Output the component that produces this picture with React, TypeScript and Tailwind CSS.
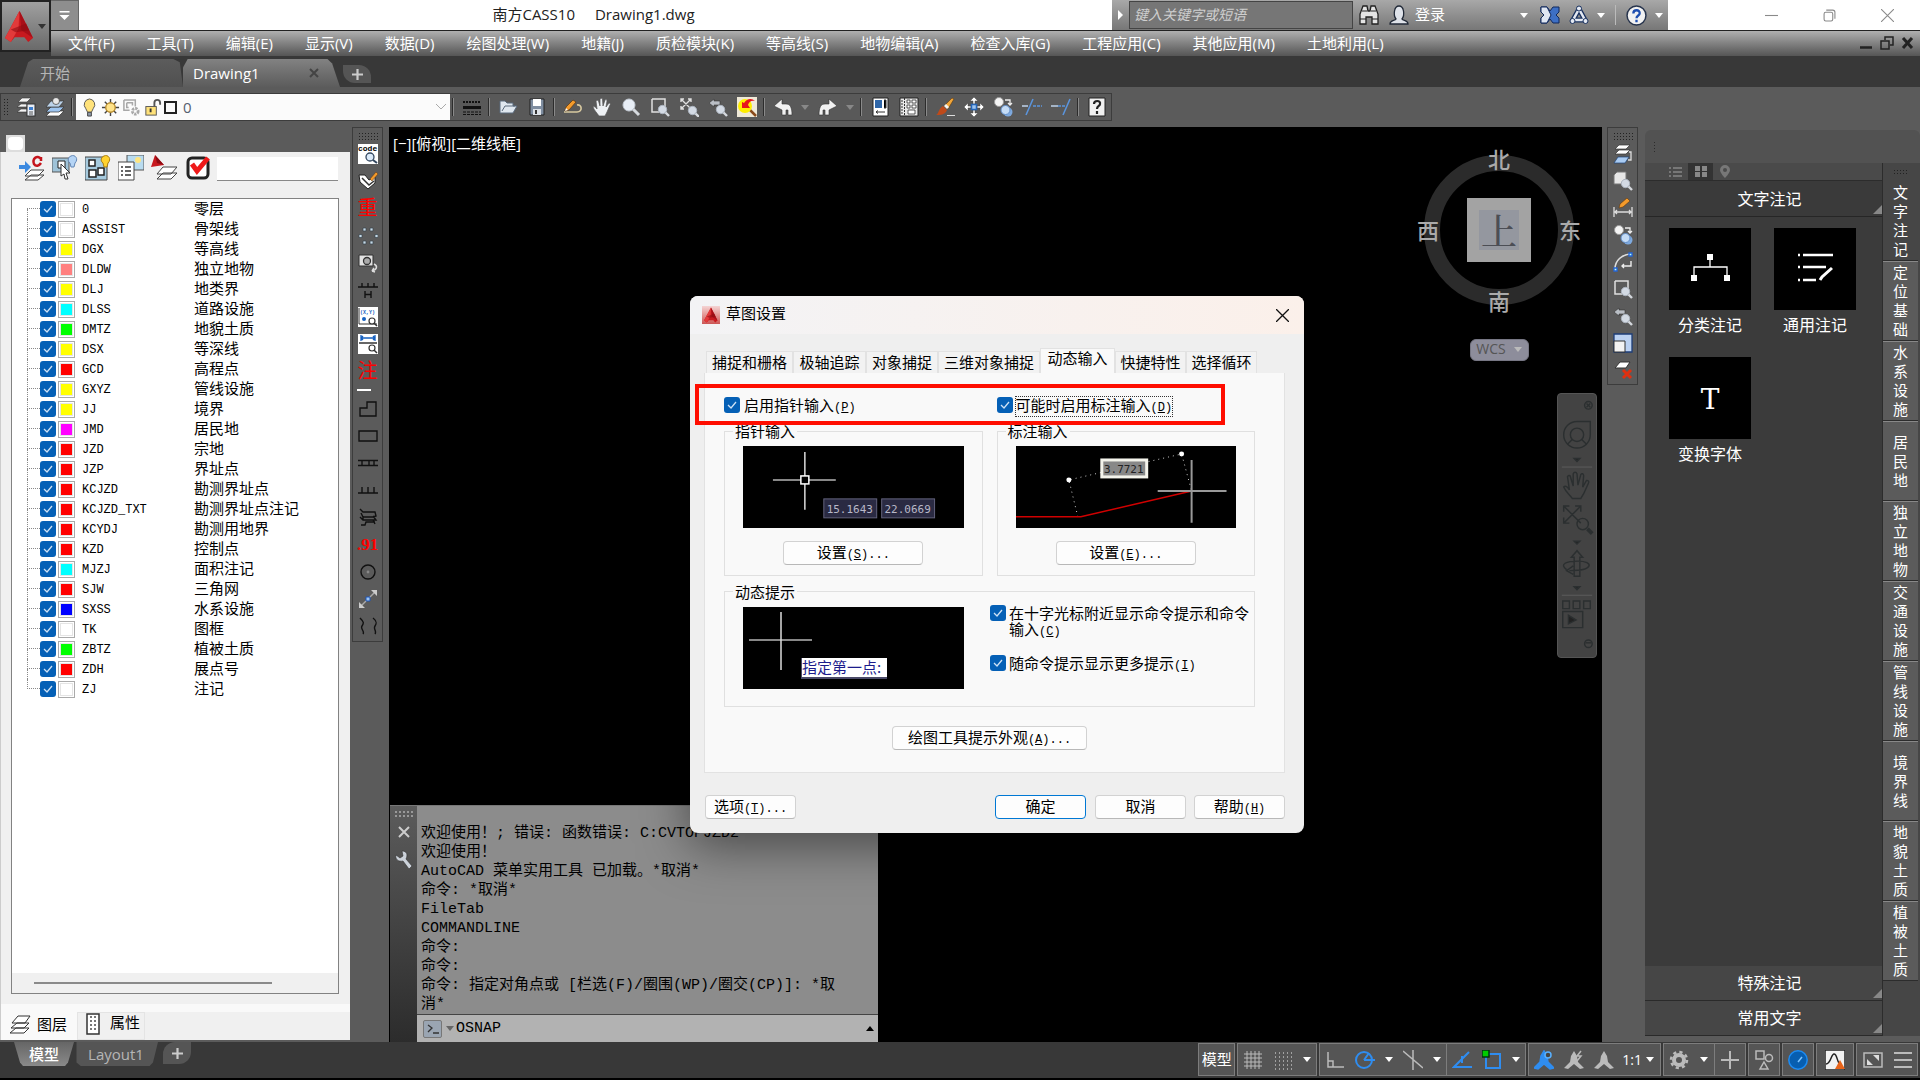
import type { ReactNode } from 'react';

const MENUS = [
  '文件(F)', '工具(T)', '编辑(E)', '显示(V)', '数据(D)', '绘图处理(W)', '地籍(J)', '质检模块(K)',
  '等高线(S)', '地物编辑(A)', '检查入库(G)', '工程应用(C)', '其他应用(M)', '土地利用(L)',
];

const LAYERS = [
  { code: '0', name: '零层', color: '#ffffff' },
  { code: 'ASSIST', name: '骨架线', color: '#ffffff' },
  { code: 'DGX', name: '等高线', color: '#ffff00' },
  { code: 'DLDW', name: '独立地物', color: '#ff8080' },
  { code: 'DLJ', name: '地类界', color: '#ffff00' },
  { code: 'DLSS', name: '道路设施', color: '#00ffff' },
  { code: 'DMTZ', name: '地貌土质', color: '#00ff00' },
  { code: 'DSX', name: '等深线', color: '#ffff00' },
  { code: 'GCD', name: '高程点', color: '#ff0000' },
  { code: 'GXYZ', name: '管线设施', color: '#ffff00' },
  { code: 'JJ', name: '境界', color: '#ffff00' },
  { code: 'JMD', name: '居民地', color: '#ff00ff' },
  { code: 'JZD', name: '宗地', color: '#ff0000' },
  { code: 'JZP', name: '界址点', color: '#ff0000' },
  { code: 'KCJZD', name: '勘测界址点', color: '#ff0000' },
  { code: 'KCJZD_TXT', name: '勘测界址点注记', color: '#ff0000' },
  { code: 'KCYDJ', name: '勘测用地界', color: '#ff0000' },
  { code: 'KZD', name: '控制点', color: '#ff0000' },
  { code: 'MJZJ', name: '面积注记', color: '#00ffff' },
  { code: 'SJW', name: '三角网', color: '#ff0000' },
  { code: 'SXSS', name: '水系设施', color: '#0000ff' },
  { code: 'TK', name: '图框', color: '#ffffff' },
  { code: 'ZBTZ', name: '植被土质', color: '#00ff00' },
  { code: 'ZDH', name: '展点号', color: '#ff0000' },
  { code: 'ZJ', name: '注记', color: '#ffffff' },
];

const LOG = [
  '欢迎使用！; 错误: 函数错误: C:CVTOPJZD2',
  '欢迎使用！',
  'AutoCAD 菜单实用工具 已加载。*取消*',
  '命令: *取消*',
  'FileTab',
  'COMMANDLINE',
  '命令:',
  '命令:',
  '命令: 指定对角点或 [栏选(F)/圈围(WP)/圈交(CP)]: *取消*',
];

const SIDE_TABS = ['文字注记', '定位基础', '水系设施', '居民地', '独立地物', '交通设施', '管线设施', '境界线', '地貌土质', '植被土质'];

const lens = (
  <g>
    <path d="M15 15l4 4" stroke="#d5d9de" strokeWidth="2.4" />
    <circle cx="12.5" cy="12.5" r="4.2" fill="#d3dae4" stroke="#aab2bd" />
  </g>
);

const ICONS: Record<string, ReactNode> = {
  layerProps: (
    <g>
      <path d="M2 5l4-4h9l-4 4zM1 10l4-3h6v3zM1 15l4-3h6v3z" fill="#f4f4f4" stroke="#333" strokeWidth=".6" />
      <rect x="11" y="7" width="8" height="12" fill="#e8edf5" stroke="#333" />
      <rect x="13" y="10" width="4" height="3" fill="#3d7fd0" />
      <path d="M13 15h4M13 17h4" stroke="#555" />
    </g>
  ),
  layerStates: (
    <g stroke="#333" strokeWidth=".7">
      <path d="M1 19l5-5h13l-5 5z" fill="#fff" />
      <path d="M1 15l5-5h13l-5 5z" fill="#9ec5f0" />
      <path d="M1 10l5-6h13l-5 6z" fill="#bcd3ea" />
      <circle cx="11" cy="4" r="3.500" fill="#e8e8e8" />
    </g>
  ),
  bulb: (
    <g>
      <path d="M10 1a6 6 0 0 0-4 10l2 4h4l2-4a6 6 0 0 0-4-10z" fill="#ffe27a" stroke="#555" />
      <path d="M8 15h4v4H8z" fill="#8d99aa" stroke="#444" />
    </g>
  ),
  sun: (
    <g>
      <path d="M10 1v18M1 10h18M4 4l12 12M16 4L4 16" stroke="#444" strokeWidth="1.5" />
      <circle cx="10" cy="10" r="5" fill="#ffe38a" stroke="#b68a2c" strokeWidth="1.4" />
    </g>
  ),
  vpFreeze: (
    <g fill="none" stroke="#a8a8a8" strokeWidth="1.6">
      <path d="M2 2h12v7M2 2v11h6M5 5h6v3M5 5v5h2" />
      <circle cx="14" cy="14" r="3" strokeWidth="3" strokeDasharray="2.4 1" />
    </g>
  ),
  unlock: (
    <g>
      <path d="M12 9V5a3 3 0 0 1 6 0v2" fill="none" stroke="#555" strokeWidth="2" />
      <rect x="3" y="9" width="11" height="9" fill="#ffe27a" stroke="#555" />
      <path d="M8 11v4" stroke="#333" strokeWidth="2" />
    </g>
  ),
  lineweight: (
    <g stroke="#111">
      <path d="M1 5h18" strokeWidth="2" strokeDasharray="2 1" />
      <path d="M1 10.500h18" strokeWidth="3" />
      <path d="M1 15h18M1 17.500h18" strokeDasharray="3 1" />
    </g>
  ),
  open: <path d="M2 16V4h5l2 2h6v3h4l-4 7zM4 14l3-5h10" fill="#dfe7ef" stroke="#5a6a7c" />,
  save: (
    <g>
      <path d="M3 2h14v16H3z" fill="#7e8da0" stroke="#222" />
      <path d="M6 2h8v7H6z" fill="#fff" />
      <path d="M6 12h8v6H6z" fill="#dde2e8" />
      <path d="M8 13h2v4H8z" fill="#333" />
    </g>
  ),
  sketch: (
    <g>
      <path d="M1 15h13c6 0 5-8 0-7" fill="none" stroke="#d8c9a0" strokeWidth="1.6" />
      <path d="M2 14l1-4 7-7 3 2-7 8z" fill="#f39a2b" stroke="#5a3510" strokeWidth=".7" />
      <path d="M2 14l1-3 2 2z" fill="#fff" />
    </g>
  ),
  hand: <path d="M7 19c-2-3-5-6-6-9 1-1 3 0 4 2L4 4c1-1 2-1 2.500 0L8 9V2c1-1 2-1 2.500 0L11 9l2-6c1-1 2 0 2 1l-1 6 3-4c1 0 2 1 1 2l-3 7-2 4z" fill="#eef1f4" stroke="#555" strokeWidth=".7" />,
  zoom: (
    <g>
      <path d="M12 12l6 6" stroke="#d5d9de" strokeWidth="3" />
      <circle cx="8" cy="8" r="6" fill="#e8eef6" stroke="#c2c9d2" />
    </g>
  ),
  zoomWin: <g><path d="M2 2h13v8M2 2v13h7" fill="none" stroke="#e0e0e0" strokeWidth="1.5" />{lens}</g>,
  zoomExt: <g><path d="M2 2l10 10M12 2L2 12M2 5V2h3M9 2h3v3M2 9v3h3" fill="none" stroke="#e0e0e0" strokeWidth="1.4" /><g transform="translate(1 1)">{lens}</g></g>,
  zoomPrev: <g><path d="M1 6l5-4v2h6v4H6v2z" fill="#b9bec5" stroke="#333" strokeWidth=".6" />{lens}</g>,
  realtime: (
    <g>
      <path d="M0 0h20v20H0z" fill="#efe9d8" />
      <path d="M13 13l6 6" stroke="#8a4a1a" strokeWidth="2.500" />
      <circle cx="8" cy="9" r="7" fill="#ffee00" />
      <path d="M5 11V5l2 1c3-5 8-5 11-2-4-1-6 1-7 4l2 3z" fill="#e8141c" />
    </g>
  ),
  undo: <path d="M1 9l8-7v5h4c4 0 6 3 6 11h-4v-5h-2v5H9v-5z" fill="#f1f1f1" stroke="#333" strokeWidth=".6" />,
  redo: <path d="M19 9l-8-7v5H7c-4 0-6 3-6 11h4v-5h2v5h4v-5z" fill="#f1f1f1" stroke="#333" strokeWidth=".6" />,
  props: (
    <g>
      <path d="M3 1h15v18H3z" fill="#fff" stroke="#222" />
      <path d="M5 3h7v8H5z" fill="#2f66a8" />
      <path d="M14 3h2v8h-2M6 15h9M6 15l2-1.500M6 15l2 1.500" stroke="#333" />
    </g>
  ),
  design: (
    <g>
      <path d="M1 1h18v18H1z" fill="#e8e8e8" stroke="#222" />
      <path d="M3 3v14M5.500 1v18" stroke="#333" strokeDasharray="2 1" />
      <path d="M8 3h3v3H8zM13 3h4v3h-4zM8 8h3v3H8zM13 8h4v3h-4zM9 13h7v4H9z" fill="#fff" stroke="#333" strokeWidth=".8" />
    </g>
  ),
  match: (
    <g>
      <path d="M9 9l8-8 2 1-6 10z" fill="#f2a63a" stroke="#5c3a12" strokeWidth=".6" />
      <path d="M9 9l2-2 3 3-2 2z" fill="#f4f4f4" />
      <path d="M1 18c3-1 2-6 7-9l4 4c-2 5-7 5-11 5z" fill="#c04a1a" />
      <path d="M12 18.500h8" stroke="#ddd" />
    </g>
  ),
  move: (
    <g>
      <path d="M10 0l4 4h-3v3H9V4H6zM10 20l4-4h-3v-3H9v3H6zM0 10l4-4v3h3v2H4v3zM20 10l-4-4v3h-3v2h3v3z" fill="#fff" stroke="#444" strokeWidth=".5" />
      <rect x="7.500" y="7.500" width="5" height="5" fill="#9ec5f0" stroke="#2465b8" strokeWidth="1.500" />
    </g>
  ),
  copy: (
    <g>
      <circle cx="6" cy="5" r="4.500" fill="#f4f4f4" stroke="#999" />
      <path d="M12 3h5v5M15 6l2 2 2-2" fill="none" stroke="#eee" strokeWidth="1.300" />
      <circle cx="15" cy="15" r="4.500" fill="#7ea9de" />
      <circle cx="12.500" cy="13" r="4.500" fill="#c5dcf6" stroke="#5f8cc8" />
    </g>
  ),
  trim: <g strokeWidth="1.600" fill="none"><path d="M0 9h6" stroke="#b8cbe2" /><path d="M4 18L11 2" stroke="#5b95dd" /><path d="M11 9h9" stroke="#5b95dd" strokeDasharray="3 1" /></g>,
  extend: <g strokeWidth="1.600" fill="none"><path d="M0 9h7" stroke="#b8cbe2" /><path d="M12 18L19 2" stroke="#5b95dd" /><path d="M7 9h8" stroke="#5b95dd" strokeDasharray="3 1" /></g>,
  help: (
    <g>
      <path d="M2 1h16v18H2z" fill="#f0f0f0" stroke="#222" />
      <path d="M7 7c0-4 7-4 6 0 0 2-3 2-3 5M10 14v3" fill="none" stroke="#222" strokeWidth="2.200" />
    </g>
  ),
  // left tool column
  code: (
    <g>
      <path d="M0 0h20v20H0z" fill="#fff" />
      <text x="0" y="7" fontSize="8" fontFamily="Liberation Mono" fontWeight="bold">code</text>
      <circle cx="12" cy="13" r="4" fill="#dcebfa" stroke="#33475f" strokeWidth="1.300" />
      <path d="M15 16l4 3" stroke="#33475f" strokeWidth="2" />
    </g>
  ),
  tagEdit: (
    <g>
      <path d="M1 4h6l4 5 6-3v6l-7 6-8-7z" fill="#fff" stroke="#222" />
      <path d="M4 7l7 7 5-4" fill="none" stroke="#333" strokeWidth="1.500" />
      <path d="M12 8l6-7 2 2-6 7z" fill="#f39a2b" stroke="#5a3510" strokeWidth=".5" />
    </g>
  ),
  dots: <g fill="#c6dbe8" stroke="#38434c" strokeWidth=".7"><path d="M5 2h3v3H5zM12 2h3v3h-3zM1 8.500h3v3H1zM17 8.500h3v3h-3zM5 15h3v3H5zM12 15h3v3h-3z" /></g>,
  camera: (
    <g>
      <path d="M1 2h14v11H1z" fill="#e2e2e2" stroke="#333" />
      <circle cx="9" cy="8" r="3.500" fill="#aaa" stroke="#333" strokeWidth="1.300" />
      <path d="M16 11c4 2 3 6-2 7m0 0l2-3m-2 3l3 1" fill="none" stroke="#ddd" strokeWidth="1.500" />
    </g>
  ),
  dimH: <path d="M0 7h20M4 7V3M10 7V3M16 7V3M7 11v7M13 11v7M7 14.500h6" fill="none" stroke="#111" strokeWidth="1.400" />,
  coord: (
    <g>
      <path d="M0 0h20v20H0z" fill="#fff" />
      <path d="M1 1v16h18" fill="none" stroke="#333" />
      <text x="2" y="7" fontSize="5" fontFamily="Liberation Mono" fontWeight="bold" fill="#1560c0">(X,Y)</text>
      <circle cx="6" cy="12" r="2" fill="#1560c0" />
      <circle cx="14" cy="14" r="3" fill="#fff" stroke="#333" strokeWidth="1.200" />
      <path d="M16 16l3 3" stroke="#333" strokeWidth="1.500" />
    </g>
  ),
  dist: (
    <g>
      <path d="M0 0h20v20H0z" fill="#fff" />
      <path d="M3 4h14M3 1v6M17 1v6M5 2L3 4l2 2M15 2l2 2-2 2" fill="none" stroke="#1560c0" strokeWidth="1.300" />
      <path d="M1 9h18" stroke="#333" strokeWidth="1.500" />
      <circle cx="14" cy="14" r="3" fill="#fff" stroke="#333" strokeWidth="1.200" />
      <path d="M16 16l3 3" stroke="#333" strokeWidth="1.500" />
    </g>
  ),
  poly: <path d="M2 17V9h7V3h9v14z" fill="none" stroke="#111" strokeWidth="1.400" />,
  rect: <path d="M1 5h18v10H1z" fill="none" stroke="#111" strokeWidth="1.400" />,
  rail: <path d="M0 7.500h20M0 12.500h20M4 8v4M11 8v4M16 8v4" fill="none" stroke="#111" strokeWidth="1.400" />,
  comb: <path d="M0 13h20M4 13V7M10 13V7M16 13V7" fill="none" stroke="#111" strokeWidth="1.400" />,
  weave: <path d="M2 2l3 3h12l1 4-3 1H5L3 6M5 9v4M15 9l3 4H5l-3-3M15 13l2 4M3 18h4l1-3h9" fill="none" stroke="#111" strokeWidth="1.400" />,
  ring: <g fill="none" stroke="#111" strokeWidth="1.400"><circle cx="10" cy="10" r="7" /><circle cx="10" cy="10" r=".7" stroke="#888" /></g>,
  stretch: (
    <g>
      <path d="M3 17L17 3" stroke="#aaa" strokeWidth="1.400" />
      <path d="M19 1v6l-6-6zM1 19v-6l6 6z" fill="#ccc" />
      <path d="M8 8h4v4H8z" fill="#9ec5f0" stroke="#1d55b8" />
    </g>
  ),
  waves: <path d="M2 2c4 4 4 5 2 8s3 5 1 8M15 2c4 3 4 5 2 8s2 5 0 8" fill="none" stroke="#111" strokeWidth="1.400" />,
  // right tool column
  layerWalk: (
    <g stroke="#333" strokeWidth=".7">
      <path d="M2 5l4-4h11l-4 4zM2 10l4-4h11l-4 4z" fill="#fff" />
      <path d="M1 19l4-6h11l-4 6z" fill="#a9cbf2" stroke="#1e4378" />
      <path d="M16 8h2v8h-3" fill="none" stroke="#ddd" strokeWidth="1.300" />
    </g>
  ),
  zoomObj: <g><path d="M1 4l3-3h9v9l-3 3H1z" fill="#e6e6e6" stroke="#777" />{lens}</g>,
  dimEdit: (
    <g>
      <path d="M1 9v10M19 9v10M2 14h16M4 12l-2 2 2 2M16 12l2 2-2 2" fill="none" stroke="#ddd" strokeWidth="1.300" />
      <path d="M6 10l1-4 7-6 3 3-7 6z" fill="#f39a2b" stroke="#5a3510" strokeWidth=".6" />
    </g>
  ),
  arc: (
    <g fill="none">
      <path d="M2 17C2 8 9 3 17 2" stroke="#ddd" strokeWidth="1.600" />
      <path d="M18 9v5H9m2-2l-2 2 2 2" stroke="#eee" strokeWidth="1.400" />
      <path d="M16 1h3v3h-3zM1 16h3v3H1z" fill="#bfe" stroke="#2465d8" strokeWidth="1.300" />
    </g>
  ),
  scale: (
    <g>
      <path d="M1 1h18v18H1z" fill="#bcd2f2" stroke="#1e3e78" strokeWidth="1.300" />
      <path d="M1 8h11v11H1z" fill="#f3f3f3" stroke="#333" />
    </g>
  ),
  layerDel: (
    <g>
      <path d="M2 8l5-6h10l-4 6z" fill="#fff" stroke="#333" />
      <path d="M10 10l8 8M18 10l-8 8" stroke="#e03010" strokeWidth="3" />
    </g>
  ),
};

function Ico({ name, size = 20 }: { name: string; size?: number }) {
  return <svg viewBox="0 0 20 20" width={size} height={size} aria-hidden="true">{ICONS[name]}</svg>;
}

function Caret({ className = 'text-white' }: { className?: string }) {
  return (
    <svg viewBox="0 0 8 5" width="8" height="5" className={className} aria-hidden="true">
      <path d="M0 0h8L4 5z" fill="currentColor" />
    </svg>
  );
}

function Logo({ size }: { size: number }) {
  return (
    <svg viewBox="0 0 30 34" width={size} height={size + 4} aria-hidden="true">
      <path d="M15 1L29 29l-5 4-4-5H10l-4 5-6-4z" fill="#c8191f" />
      <path d="M15 1L0 29l6 4 8-14z" fill="#e23a3a" />
      <path d="M15 1l14 28-12-8z" fill="#a80f18" />
      <path d="M6 20l16-6 3 7-14 2z" fill="#8e0b12" opacity=".6" />
    </svg>
  );
}

function Tool({ name }: { name: string }) {
  return (
    <button aria-label={name} className="flex w-[29px] shrink-0 items-center justify-center">
      <Ico name={name} />
    </button>
  );
}

function Sep() {
  return <span className="my-1 mr-[3px] ml-0.5 w-0.5 shrink-0 border-l border-[#2c2c2c] bg-[#8a8a8a]" />;
}

function Grip() {
  return (
    <span className="block h-2 w-5 bg-[radial-gradient(#222_1px,transparent_1px)] bg-[length:3px_3px]" />
  );
}

function Check({ label, children, className = '' }: { label?: string; children?: ReactNode; className?: string }) {
  return (
    <label className={`flex items-start ${className}`}>
      <span className="grid size-4 shrink-0">
        <input type="checkbox" defaultChecked aria-label={label} className="col-start-1 row-start-1 size-4 appearance-none rounded-[3px] bg-[#0560b6]" />
        <svg viewBox="0 0 16 16" className="pointer-events-none col-start-1 row-start-1" aria-hidden="true">
          <path d="M4 8l3 3 5-6" fill="none" stroke="#cfe2f5" strokeWidth="1.300" />
        </svg>
      </span>
      {children}
    </label>
  );
}

function Key({ k, dots }: { k: string; dots?: boolean }) {
  return (
    <span className="font-['Liberation_Mono',monospace] text-[12px]">
      (<u>{k}</u>){dots && '...'}
    </span>
  );
}

function DialogButton({ children, primary, className = '' }: { children: ReactNode; primary?: boolean; className?: string }) {
  const border = primary ? 'border-[#0078d4]' : 'border-[#d2d2d2] border-b-[#b8b8b8]';
  return (
    <button className={`h-6 rounded border bg-[#fdfdfd] pb-0.5 text-center leading-5 ${border} ${className}`}>
      {children}
    </button>
  );
}

function TitleBar() {
  return (
    <div className="flex h-[30px] bg-white">
      <button aria-label="自定义快速访问工具栏" className="flex w-7 items-center justify-center border-t border-r border-[#666] bg-[#8e8e8e]">
        <svg viewBox="0 0 10 9" width="11" height="9"><path d="M0 0h10v1.500H0zM0 4h10L5 9z" fill="#fff" /></svg>
      </button>
      <div className="flex flex-1 items-center justify-center gap-5 pr-1 pb-0.5 text-[15px] text-[#222]">
        <span>南方CASS10</span>
        <span>Drawing1.dwg</span>
      </div>
      <div className="flex w-[556px] items-center bg-linear-to-b from-[#a8a8a8] to-[#777]">
        <span className="flex w-[17px] justify-center">
          <svg viewBox="0 0 5 10" width="5" height="10"><path d="M0 0l5 5-5 5z" fill="#fff" /></svg>
        </span>
        <input
          aria-label="搜索"
          placeholder="键入关键字或短语"
          className="h-7 w-[224px] border border-[#444] bg-[#767676] px-1 pb-0.5 text-[14px] italic placeholder:text-[#cfcfcf]"
        />
        <svg viewBox="0 0 20 20" width="20" height="20" className="ml-1.5">
          <path d="M1 19V9l3-8h4l1 5h2l1-5h4l3 8v10h-6v-7h-6v7z" fill="#e4e4e4" stroke="#222" strokeWidth="1.300" />
          <path d="M1 14h6M13 14h6M3 6h5M12 6h5" stroke="#222" />
        </svg>
        <svg viewBox="0 0 20 20" width="20" height="20" className="ml-2.5">
          <path d="M1 19c0-4 5-3 6-5-3-4-2-13 3-13s6 9 3 13c1 2 6 1 6 5z" fill="#dfe3ea" stroke="#222a38" strokeWidth="1.300" />
        </svg>
        <span className="ml-1.5 w-[30px] pb-0.5 text-[15px] text-white">登录</span>
        <span className="ml-[75px]"><Caret /></span>
        <svg viewBox="0 0 20 20" width="20" height="20" className="ml-[12px]">
          <path d="M1 2h6l3 4 3-4h6v5l-3 3 3 3v5h-6l-3-4-3 4H1v-5l3-3-3-3z" fill="#3d6fc4" stroke="#10285c" />
          <path d="M1 2h6l4 8-4 8H1v-5l3-3-3-3z" fill="#dfe6f2" stroke="#10285c" />
        </svg>
        <svg viewBox="0 0 20 20" width="20" height="20" className="ml-[9px]">
          <path d="M10 4L4 15h12z" fill="none" stroke="#18305e" strokeWidth="5" strokeLinejoin="round" />
          <path d="M10 4L4 15h12z" fill="none" stroke="#e4e9f2" strokeWidth="2.500" />
          <g fill="#e4e9f2" stroke="#18305e"><circle cx="10" cy="3.500" r="2.500" /><circle cx="3.500" cy="16" r="2.500" /><circle cx="16.500" cy="16" r="2.500" /></g>
        </svg>
        <span className="ml-2"><Caret /></span>
        <span className="mx-2.5 h-5 w-px bg-[#bbb]" />
        <svg viewBox="0 0 20 20" width="21" height="21">
          <circle cx="10" cy="10" r="9" fill="#f2f2f2" stroke="#27344d" strokeWidth="1.400" />
          <path d="M7 8c0-4 6.500-4 6 0 0 2-3 2-3 4.500M10 14v2.500" fill="none" stroke="#1f4fb0" strokeWidth="2.200" />
        </svg>
        <span className="ml-2"><Caret /></span>
      </div>
      <div className="flex w-[252px] items-center justify-around pr-1 pl-[74px] text-[#8a8a8a]">
        <svg viewBox="0 0 12 12" width="13" height="13" fill="none" stroke="currentColor"><path d="M0 6h12" /></svg>
        <svg viewBox="0 0 12 12" width="13" height="13" fill="none" stroke="currentColor"><rect x="1" y="3" width="8" height="8" rx="1.500" /><path d="M3 1h6a2 2 0 0 1 2 2v6" /></svg>
        <svg viewBox="0 0 12 12" width="13" height="13" fill="none" stroke="currentColor"><path d="M0 0l12 12M12 0L0 12" /></svg>
      </div>
    </div>
  );
}

function MenuBar() {
  return (
    <nav className="flex h-[26px] items-center justify-between border-t border-[#222] bg-linear-to-b from-[#b0b0b0] to-[#555] pr-1.5 pb-0.5 pl-[17px]">
      <div className="flex gap-8 text-[15px] leading-6 text-white">
        {MENUS.map((m) => <button key={m} className="whitespace-nowrap">{m}</button>)}
      </div>
      <svg viewBox="0 0 54 16" width="54" height="16" fill="none" stroke="#222" strokeWidth="2">
        <path d="M0 12.500h12" strokeWidth="2.500" />
        <path d="M21 6h8v8h-8zM25 5V2h8v8h-3" strokeWidth="1.500" />
        <path d="M43 3l9 10M52 3l-9 10" strokeWidth="3" />
      </svg>
    </nav>
  );
}

function FileTabs() {
  return (
    <div className="flex h-[31px] items-end bg-[#383838] pl-5 text-[15px]">
      <button className="h-7 w-[163px] bg-linear-to-b from-[#5c5c5c] to-[#505050] pl-5 text-left text-[#b5b5b5] [clip-path:polygon(0_100%,5%_12%,8%_0,94%_0,98%_12%,100%_100%)]">开始</button>
      <div className="flex h-7 w-[157px] items-center justify-between bg-linear-to-b from-[#828282] to-[#5c5c5c] pr-[21px] pl-2.5 text-white [clip-path:polygon(0_30%,3%_0,92%_0,95%_16%,100%_100%,0_100%)]">
        <button>Drawing1</button>
        <button aria-label="关闭">
          <svg viewBox="0 0 10 10" width="10" height="10"><path d="M1 1l8 8M9 1L1 9" stroke="#444" strokeWidth="2" /></svg>
        </button>
      </div>
      <button aria-label="新建" className="mb-1 ml-[3px] flex h-[18px] w-7 items-center justify-center rounded-tr-xl rounded-bl-xl bg-[#555]">
        <svg viewBox="0 0 10 10" width="11" height="11"><path d="M5 0v10M0 5h10" stroke="#ccc" strokeWidth="2" /></svg>
      </button>
    </div>
  );
}

function Toolbar() {
  return (
    <div className="flex h-10 bg-[#5b5b5b] py-1.5">
      <div className="flex h-[28px] border border-[#3c3c3c] bg-[#595959]">
        <span className="mx-0.5 my-1 w-1.5 bg-[radial-gradient(#222_1px,transparent_1px)] bg-[length:3px_3px]" />
        <Tool name="layerProps" />
        <Tool name="layerStates" />
        <Sep />
        <div className="flex w-[374px] items-center gap-0.5 bg-[#fbfbfb] pr-1 pl-1 text-[15px] text-[#556070]">
          <Ico name="bulb" size={19} />
          <Ico name="sun" size={19} />
          <Ico name="vpFreeze" size={19} />
          <Ico name="unlock" size={19} />
          <span className="size-[13px] border-2 border-[#222]" />
          <span className="ml-1">0</span>
          <svg viewBox="0 0 10 6" width="10" height="6" className="ml-auto"><path d="M0 0l5 5 5-5" fill="none" stroke="#aaa" /></svg>
        </div>
        <Sep />
        <Tool name="lineweight" />
        <Sep />
        <Tool name="open" />
        <Tool name="save" />
        <Sep />
        {['sketch', 'hand', 'zoom', 'zoomWin', 'zoomExt', 'zoomPrev', 'realtime'].map((n) => <Tool key={n} name={n} />)}
        <Sep />
        <Tool name="undo" />
        <span className="flex w-4 items-center justify-center"><Caret className="text-[#888]" /></span>
        <Tool name="redo" />
        <span className="flex w-4 items-center justify-center"><Caret className="text-[#888]" /></span>
        <Sep />
        <Tool name="props" />
        <Tool name="design" />
        <Sep />
        {['match', 'move', 'copy', 'trim', 'extend'].map((n) => <Tool key={n} name={n} />)}
        <Sep />
        <Tool name="help" />
      </div>
    </div>
  );
}

function PanelIcons() {
  return (
    <div className="flex h-8 items-center gap-[7px]">
      <svg viewBox="0 0 26 26" width="26" height="26">
        <path d="M6 21l6-6h13l-6 6zM6 25l6-5h13l-6 5z" fill="#fff" stroke="#444" />
        <path d="M0 10h6V6l6 6-6 6v-4H0z" fill="#3c8ae0" />
        <path d="M22 4c-4-5-9 0-7 5 2 3 5 2 7-1M22 2v4" fill="none" stroke="#c4141c" strokeWidth="2.500" />
      </svg>
      <svg viewBox="0 0 26 26" width="26" height="26">
        <path d="M0 3h17v14H0z" fill="#9fc3d8" stroke="#555" />
        <path d="M6 6h7v7H6z" fill="#fff" stroke="#222" />
        <path d="M9 9l9 9-4 0 2 6-3 0-1-5-3 2z" fill="#fff" stroke="#333" />
        <path d="M19 1c4-2 8 3 4 7l-1 4h-3l-1-4c-3-2-2-6 1-7z" fill="#b5d4f5" stroke="#6286b5" />
      </svg>
      <svg viewBox="0 0 26 26" width="26" height="26">
        <path d="M0 2h22v23H0z" fill="#a6cade" stroke="#444" />
        <path d="M4 5h6v6H4zM4 15h7v7H4zM13 13h6v7h-6z" fill="#fff" stroke="#222" strokeWidth="1.500" />
        <path d="M19 1c4-2 8 3 4 7l-1 4h-3l-1-4c-3-2-2-6 1-7z" fill="#ffd22e" stroke="#a97c10" />
      </svg>
      <svg viewBox="0 0 26 26" width="26" height="26">
        <path d="M9 0h17v15H9z" fill="#b9dcf0" stroke="#555" />
        <circle cx="20" cy="5" r="3" fill="#ffe680" />
        <path d="M0 7h16v18H0z" fill="#fff" stroke="#444" />
        <path d="M3 12h2M7 12h6M3 16h2M7 16h6M3 20h2M7 20h6" stroke="#333" strokeWidth="1.500" />
      </svg>
      <svg viewBox="0 0 26 26" width="26" height="26">
        <path d="M6 19l6-7h14l-6 7zM6 24l6-6h14l-6 6z" fill="#fff" stroke="#444" />
        <path d="M0 12L4 0l9 10z" fill="#c8191f" />
        <path d="M4 0l9 10-7-2z" fill="#8e0b12" />
      </svg>
      <svg viewBox="0 0 26 26" width="26" height="26" className="ml-0.5">
        <rect x="2" y="3" width="20" height="20" rx="4" fill="#fff" stroke="#222" strokeWidth="3" />
        <path d="M6 9l5 7L22 3" fill="none" stroke="#ef1a1a" strokeWidth="5" />
      </svg>
    </div>
  );
}

function LayerPanel() {
  return (
    <aside className="flex w-[350px] shrink-0 flex-col bg-[#5b5b5b] text-black">
      <div className="h-[25px] pt-2 pl-1.5">
        <div className="h-[17px] w-[19px] bg-[#ddd] p-0.5"><div className="size-full rounded bg-white" /></div>
      </div>
      <div className="flex flex-1 flex-col border-l border-[#ccc] bg-[#f0f0f0]">
        <div className="flex h-[46px] items-start pr-3 pl-[18px]">
          <PanelIcons />
          <input aria-label="过滤图层" className="mt-[5px] ml-[5px] h-6 min-w-0 flex-1 border-b border-[#888] bg-white" />
        </div>
        <div className="mr-[11px] ml-2.5 flex flex-1 flex-col border border-[#828282] bg-white">
          <ul className="flex-1">
            {LAYERS.map((l, i) => (
              <li key={l.code} className="flex h-5 items-center pl-[15px]">
                <span className="flex h-5 w-[13px] flex-col">
                  <span className={`h-2.5 border-b border-dotted border-[#888] ${i > 0 ? 'border-l' : ''}`} />
                  <span className={`h-2.5 border-dotted border-[#888] ${i < LAYERS.length - 1 ? 'border-l' : ''}`} />
                </span>
                <Check label={l.name} />
                <span className="ml-0.5 size-[17px] border border-[#aaa] p-px">
                  <span className="block size-full border border-[#e4e4e4]" style={{ backgroundColor: l.color }} />
                </span>
                <span className="ml-[7px] w-28 pt-0.5 font-['Liberation_Mono',monospace] text-[12px] leading-[18px]">{l.code}</span>
                <span className="pb-0.5 text-[15px] leading-[18px]">{l.name}</span>
              </li>
            ))}
          </ul>
          <div className="flex h-5 items-center bg-[#f0f0f0] px-[22px]">
            <div className="h-0.5 w-[238px] bg-[#8a8a8a]" />
          </div>
        </div>
        <div className="mt-2.5 h-2 bg-[#f9f9f9]" />
        <div className="flex h-7 text-[15px]">
          <button className="flex w-[76px] items-center gap-1.5 bg-[#f9f9f9] pb-1 pl-2">
            <svg viewBox="0 0 22 22" width="22" height="22" fill="#fff" stroke="#333"><path d="M1 20l6-5h13l-5 5zM2 15l6-5h12l-5 5zM3 10l6-7h12l-5 7z" /></svg>
            图层
          </button>
          <button className="flex w-[68px] items-start gap-2.5 border border-[#e4e4e4] pl-2 leading-[18px]">
            <svg viewBox="0 0 14 22" width="14" height="22"><path d="M1 1h12v20H1z" fill="#fff" stroke="#333" strokeWidth="1.500" /><path d="M5 3v16M9 3v16" stroke="#777" strokeWidth="2" strokeDasharray="2 2" /></svg>
            属性
          </button>
        </div>
      </div>
      <div className="h-0.5" />
    </aside>
  );
}

function LeftTools() {
  const slot = 'flex h-[27px] w-full items-center justify-center';
  const textSlot = 'flex h-7 w-full items-center justify-center leading-none text-[#f00]';
  return (
    <div className="w-[39px] shrink-0 bg-[#5b5b5b] pl-0.5">
      <div className="flex w-[31px] flex-col items-center border border-[#3c3c3c] pt-1 pb-0.5">
        <Grip />
        {['code', 'tagEdit'].map((n) => <button key={n} aria-label={n} className={slot}><Ico name={n} /></button>)}
        <button className={`${textSlot} text-[20px]`}>重</button>
        {['dots', 'camera', 'dimH', 'coord', 'dist'].map((n) => <button key={n} aria-label={n} className={slot}><Ico name={n} /></button>)}
        <button className={`${textSlot} text-[20px]`}>注</button>
        <span className="my-1 mr-2 h-0.5 w-3.5 bg-white" />
        {['poly', 'rect', 'rail', 'comb', 'weave'].map((n) => <button key={n} aria-label={n} className={slot}><Ico name={n} /></button>)}
        <button className={`${textSlot} font-['Liberation_Serif',serif] text-[17px] font-bold`}>.91</button>
        {['ring', 'stretch', 'waves'].map((n) => <button key={n} aria-label={n} className={slot}><Ico name={n} /></button>)}
      </div>
    </div>
  );
}

function ViewCube() {
  return (
    <div className="absolute top-[18px] right-[17px] flex w-[172px] flex-col items-center text-[22px] leading-7 font-medium text-[#aaa]">
      <div className="relative flex h-[170px] w-full items-center justify-center">
        <div className="size-[150px] rounded-full border-[16px] border-[#2b2b2b]" />
        <span className="absolute top-0">北</span>
        <span className="absolute bottom-0">南</span>
        <span className="absolute left-1">西</span>
        <span className="absolute right-1">东</span>
        <div className="absolute flex size-16 items-center justify-center bg-[#a3a3a3]">
          <span className="flex size-10 items-center justify-center bg-[#94979f] font-['Noto_Serif_CJK_SC','Noto_Sans_CJK_SC',serif] text-[36px] text-[#4c4e55]">上</span>
        </div>
      </div>
      <button className="mt-6 flex h-[22px] w-[59px] items-center justify-center gap-2 rounded-md border border-[#777784] bg-[#8d8d9b] pb-0.5 text-[14px] font-normal text-[#555]">
        WCS <Caret className="text-[#bbb]" />
      </button>
    </div>
  );
}

function NavBar() {
  return (
    <div className="absolute top-[266px] right-[5px] h-[265px] w-10 rounded border border-[#555] bg-[#434343]">
      <svg viewBox="0 0 40 265" width="38" height="263" fill="none" stroke="#2b2f30" strokeWidth="1.500">
        <circle cx="32" cy="6" r="4" />
        <path d="M30 4l4 4M34 4l-4 4" />
        <path d="M20 23h14v14a14 14 0 1 1-14-14z" /><circle cx="20" cy="37" r="7" /><path d="M15 42l-5 5M25 42l5 5" />
        <path d="M17 62h6l-3 3z" fill="#222" />
        <path d="M4 71h32" stroke="#555" />
        <path d="M15 104c-3-4-7-7-9-12 2-2 4 0 6 3l-2-14c1-2 3-1 3 0l3 10V78c1-2 3-2 4 0l1 12 3-11c1-2 3-1 3 1l-1 12 4-7c2 0 3 1 2 3l-5 11-3 5z" />
        <path d="M6 112l18 18M24 112L6 130M6 118v-6h6M18 112h6v6M6 124v6h6" />
        <circle cx="26" cy="131" r="6" /><path d="M31 136l5 5" strokeWidth="4" />
        <path d="M17 149h6l-3 3z" fill="#222" />
        <path d="M17 186v-20h-3l6-7 6 7h-3v20zM9 179c-8-6 0-9 12-9 17 0 17 10-9 10m4-5l-7 5 7 4" />
        <path d="M17 197h6l-3 3z" fill="#222" />
        <path d="M4 206h32" stroke="#555" />
        <path d="M5 212h7v8H5zM16 212h7v8h-7zM27 212h7v8h-7zM5 223h21v17H5z" />
        <path d="M11 227v9l8-4z" fill="#222" />
        <circle cx="32" cy="257" r="4" /><path d="M29 256h6" />
      </svg>
    </div>
  );
}

function CommandWindow() {
  return (
    <div className="absolute bottom-0 left-px flex h-[237px] w-[488px] border-t border-[#777] font-['Liberation_Mono','Noto_Sans_CJK_SC',monospace] text-[15px] text-black">
      <div className="flex w-[27px] flex-col items-center bg-linear-to-b from-[#5c5c5c] to-[#2c2c2c] pt-1">
        <span className="h-2 w-5 bg-[radial-gradient(#999_1px,transparent_1px)] bg-[length:4px_4px]" />
        <svg viewBox="0 0 12 12" width="12" height="12" className="mt-2"><path d="M1 1l10 10M11 1L1 11" stroke="#ccc" strokeWidth="2" /></svg>
        <svg viewBox="0 0 18 20" width="18" height="20" className="mt-3">
          <path d="M1 5l4 3 3-2-1-5c5 0 6 4 4 8l6 7-3 3-6-8C3 12 0 9 1 5z" fill="#ccd2da" stroke="#333" strokeWidth=".6" />
        </svg>
      </div>
      <div className="flex flex-1 flex-col bg-[#8c8c8c]">
        <div className="flex-1 overflow-hidden pt-[18px] pr-9 pl-1">
          {LOG.map((line, i) => <p key={i} className="leading-[19px] break-all whitespace-pre-wrap">{line}</p>)}
        </div>
        <div className="flex h-7 items-center border-t border-[#444] bg-[#b2b2b2] pr-1 pl-1.5">
          <span className="flex h-[18px] w-[19px] items-center justify-center rounded-xs border border-[#777] bg-[#9aa5b2]">
            <svg viewBox="0 0 12 10" width="12" height="10"><path d="M1 1l4 3-4 4M6 9h6" fill="none" stroke="#333" strokeWidth="1.300" /></svg>
          </span>
          <span className="ml-1"><Caret className="text-[#666]" /></span>
          <input aria-label="命令行" defaultValue="OSNAP" className="min-w-0 flex-1 bg-transparent pt-0.5 pl-0.5" />
          <span className="rotate-180"><Caret className="text-black" /></span>
        </div>
      </div>
    </div>
  );
}

function RightTools() {
  return (
    <div className="w-[43px] shrink-0 bg-[#5b5b5b] pl-[5px]">
      <div className="flex w-[31px] flex-col items-center border border-[#3c3c3c] pt-1 pb-px">
        <Grip />
        {['layerWalk', 'zoomObj', 'dimEdit', 'copy', 'arc', 'zoomWin', 'zoomPrev', 'scale', 'layerDel'].map((n) => (
          <button key={n} aria-label={n} className="flex h-[27px] w-full items-center justify-center"><Ico name={n} /></button>
        ))}
      </div>
    </div>
  );
}

function Tile({ label, children }: { label: string; children: ReactNode }) {
  return (
    <button className="flex w-[82px] flex-col items-center text-[16px] leading-[30px] text-white">
      <span className="flex size-[82px] items-center justify-center bg-black">
        <svg viewBox="0 0 40 40" width="40" height="40" fill="none" stroke="#fff">{children}</svg>
      </span>
      {label}
    </button>
  );
}

function Corner() {
  return <svg viewBox="0 0 9 9" width="9" height="9" className="absolute right-0 bottom-0.5"><path d="M9 0v9H0z" fill="#888" /></svg>;
}

function PalettePanel() {
  return (
    <aside className="flex w-[275px] shrink-0 flex-col bg-[#5b5b5b] pt-[3px] text-white">
      <div className="flex h-[33px] items-center rounded-tl-md rounded-tr-md bg-[#525252] pl-2">
        <span className="h-3 w-1 bg-[radial-gradient(#2c2c2c_1px,transparent_1px)] bg-[length:3px_3px]" />
      </div>
      <div className="flex flex-1 bg-[#464646]">
        <div className="flex flex-1 flex-col">
          <div className="flex h-[18px] border-b border-[#2c2c2c] bg-[#4a4a4a] pl-[18px]">
            <span className="flex w-[25px] items-center justify-center">
              <svg viewBox="0 0 13 10" width="13" height="10" stroke="#777" strokeWidth="2"><path d="M0 1h2M4 1h9M0 5h2M4 5h9M0 9h2M4 9h9" /></svg>
            </span>
            <span className="flex w-[25px] items-center justify-center bg-[#333]">
              <svg viewBox="0 0 12 11" width="12" height="11" fill="#888"><path d="M0 0h5v5H0zM7 0h5v5H7zM0 6h5v5H0zM7 6h5v5H7z" /></svg>
            </span>
            <span className="flex w-6 items-center justify-center">
              <svg viewBox="0 0 10 13" width="10" height="13"><path fillRule="evenodd" d="M5 0a5 5 0 0 1 5 5c0 3-5 8-5 8S0 8 0 5a5 5 0 0 1 5-5zm0 3a2 2 0 1 0 0 4 2 2 0 0 0 0-4z" fill="#777" /></svg>
            </span>
          </div>
          <button className="relative h-9 border-b border-[#262626] bg-[#3a3a3a] pl-3 text-[16px]">文字注记<Corner /></button>
          <div className="grid flex-1 grid-cols-[82px_82px] content-start gap-x-[23px] gap-y-[17px] bg-[#3b3b3b] pt-[11px] pl-6">
            <Tile label="分类注记">
              <path d="M20 8v10M4 27v-9h33v9" strokeWidth="1.300" />
              <path d="M17 5h6v6h-6zM1 26h6v6H1zM34 26h6v6h-6z" fill="#fff" stroke="none" />
            </Tile>
            <Tile label="通用注记">
              <path d="M3 6h2M8 6h30M3 18h2M8 18h23M3 31h2M8 31h13" strokeWidth="2.300" />
              <path d="M25 31l2-3 10-9" strokeWidth="3" />
            </Tile>
            <Tile label="变换字体">
              <text x="20" y="31" textAnchor="middle" fontFamily="DejaVu Serif" fontSize="28" fill="#fff" stroke="none">T</text>
            </Tile>
          </div>
          <button className="relative h-[35px] border-b border-[#2a2a2a] bg-[#464646] pl-3 text-[16px]">特殊注记<Corner /></button>
          <button className="relative h-[35px] border-b border-[#2a2a2a] bg-[#464646] pl-3 text-[16px]">常用文字<Corner /></button>
        </div>
        <div className="w-[38px] border-r-2 border-l border-r-[#464646] border-l-[#2c2c2c]">
          <div className="flex h-[18px] items-center justify-center"><span className="h-1.5 w-4 bg-[radial-gradient(#222_1px,transparent_1px)] bg-[length:3px_3px]" /></div>
          {SIDE_TABS.map((t, i) => (
            <button
              key={t}
              className={`flex h-20 w-full flex-col items-center justify-center border-b border-b-[#2c2c2c] text-[15px] leading-[19px] ${i === 0 ? 'bg-[#464646]' : 'border-t border-t-[#888] bg-[#5b5b5b]'}`}
            >
              {t.split('').map((c) => <span key={c}>{c}</span>)}
            </button>
          ))}
        </div>
      </div>
      <div className="h-1.5" />
    </aside>
  );
}

const DIALOG_TABS = [
  { label: '捕捉和栅格', w: 'w-[87px]' },
  { label: '极轴追踪', w: 'w-[73px]' },
  { label: '对象捕捉', w: 'w-[72px]' },
  { label: '三维对象捕捉', w: 'w-[102px]' },
  { label: '动态输入', w: 'w-[75px]' },
  { label: '快捷特性', w: 'w-[71px]' },
  { label: '选择循环', w: 'w-[71px]' },
];

function Group({ legend, children, className = '' }: { legend: string; children: ReactNode; className?: string }) {
  return (
    <fieldset className={`min-w-0 border border-[#e0e0e0] px-[18px] ${className}`}>
      <legend className="-ml-2.5 h-4 bg-[#f9f9f9] px-0.5 leading-4">{legend}</legend>
      {children}
    </fieldset>
  );
}

function DraftingDialog() {
  return (
    <div role="dialog" aria-label="草图设置" className="absolute top-[296px] left-[690px] w-[614px] overflow-hidden rounded-lg bg-[#efefef] text-[15px] leading-4 text-black shadow-[0_12px_50px_rgba(0,0,0,0.5)]">
      <div className="flex h-[38px] items-center bg-linear-to-r from-[#f3f3f5] to-[#fbf0ea] px-3">
        <span className="flex size-[18px] items-center justify-center bg-linear-to-b from-[#f4d4d4] to-[#c55]"><Logo size={14} /></span>
        <h2 className="ml-1.5 flex-1 pb-1">草图设置</h2>
        <button aria-label="关闭" className="mr-[3px]">
          <svg viewBox="0 0 12 12" width="13" height="13"><path d="M0 0l12 12M12 0L0 12" stroke="#111" strokeWidth="1.200" /></svg>
        </button>
      </div>
      <div className="px-[14px] pt-3.5 pb-3.5">
        <div className="flex h-[25px] items-end">
          <span className="w-0.5" />
          {DIALOG_TABS.map((t) => (
            <button
              key={t.label}
              className={`shrink-0 whitespace-nowrap border border-b-0 border-[#e2e2e2] text-center ${t.w} ${t.label === '动态输入' ? 'h-[25px] bg-[#f9f9f9] pb-1.5' : 'h-[22px] bg-[#f2f2f2] pb-0.5'}`}
            >
              {t.label}
            </button>
          ))}
        </div>
        <div className="mr-[5px] h-[400px] border border-t-0 border-[#e2e2e2] bg-[#f9f9f9] pt-6 pr-[29px] pl-[19px]">
          <div className="grid grid-cols-2 gap-x-3.5">
            <Check><span className="ml-1">启用指针输入<Key k="P" /></span></Check>
            <Check><span className="ml-[3px] outline outline-dotted outline-[#333]">可能时启用标注输入<Key k="D" /></span></Check>
          </div>
          <div className="mt-[7px] grid grid-cols-2 gap-x-3.5">
            <Group legend="指针输入" className="pb-2.5">
              <div className="mt-[7px] bg-black">
                <svg viewBox="0 0 221 82" className="w-full" fontFamily="DejaVu Sans Mono" fontSize="11">
                  <path d="M30 34h63" stroke="#888" strokeWidth="2" /><path d="M62 6v58" stroke="#ddd" strokeWidth="1.500" />
                  <rect x="58" y="30" width="8" height="8" fill="#000" stroke="#fff" strokeWidth="1.500" />
                  <rect x="81" y="53" width="53" height="19" fill="#2a2a42" stroke="#62627c" />
                  <rect x="139" y="53" width="53" height="19" fill="#2a2a42" stroke="#62627c" />
                  <text x="107" y="67" textAnchor="middle" fill="#b8b8c8">15.1643</text>
                  <text x="165" y="67" textAnchor="middle" fill="#b8b8c8">22.0669</text>
                </svg>
              </div>
              <DialogButton className="mx-auto mt-[13px] block w-[140px]">设置<Key k="S" dots /></DialogButton>
            </Group>
            <Group legend="标注输入" className="pb-2.5">
              <div className="mt-[7px] bg-black">
                <svg viewBox="0 0 221 82" className="w-full" fontFamily="DejaVu Sans Mono" fontSize="11">
                  <path d="M62 71L53 34 166 8l10 37" fill="none" stroke="#ccc" strokeDasharray="1 4" />
                  <circle cx="53" cy="34" r="2.500" fill="#fff" /><circle cx="166" cy="8" r="2.500" fill="#fff" />
                  <path d="M0 71h65l111-26" fill="none" stroke="#d00000" strokeWidth="1.500" />
                  <path d="M142 45h69M176 14v63" stroke="#999" strokeWidth="2" />
                  <rect x="86" y="14" width="45" height="17" fill="#888" stroke="#f4f4ec" strokeWidth="3" />
                  <text x="108" y="27" textAnchor="middle" fill="#222">3.7721</text>
                </svg>
              </div>
              <DialogButton className="mx-auto mt-[13px] block w-[140px]">设置<Key k="E" dots /></DialogButton>
            </Group>
          </div>
          <Group legend="动态提示" className="mt-2 pb-[17px]">
            <div className="-mr-4 flex">
              <div className="mt-[7px] w-[221px] shrink-0 bg-black">
                <svg viewBox="0 0 221 82" className="w-full" fontFamily="Noto Sans CJK SC" fontSize="15">
                  <path d="M6 33h63" stroke="#888" strokeWidth="2" /><path d="M38 5v58" stroke="#ddd" strokeWidth="1.500" />
                  <rect x="58" y="51" width="86" height="21" fill="#4a4a68" />
                  <rect x="59" y="51" width="85" height="19" fill="#fff" />
                  <text x="59" y="66" fill="#1c1c8c">指定第一点:</text>
                </svg>
              </div>
              <div className="ml-[26px] flex-1 pt-[5px]">
                <Check><span className="ml-[3px] leading-4">在十字光标附近显示命令提示和命令输入<Key k="C" /></span></Check>
                <Check className="mt-[15px]"><span className="ml-[3px]">随命令提示显示更多提示<Key k="I" /></span></Check>
              </div>
            </div>
          </Group>
          <DialogButton className="mx-auto mt-[19px] block w-[195px]">绘图工具提示外观<Key k="A" dots /></DialogButton>
        </div>
        <div className="mt-[22px] mr-[5px] flex pl-px">
          <DialogButton className="w-[91px]">选项<Key k="T" dots /></DialogButton>
          <DialogButton primary className="ml-auto w-[91px]">确定</DialogButton>
          <DialogButton className="ml-[9px] w-[91px]">取消</DialogButton>
          <DialogButton className="ml-2 w-[91px]">帮助<Key k="H" /></DialogButton>
        </div>
      </div>
      <div className="pointer-events-none absolute top-[88px] left-[5px] h-[41px] w-[530px] border-4 border-[#ff0d00]" />
    </div>
  );
}

function Slot({ children, w = 'w-[30px]' }: { children: ReactNode; w?: string }) {
  return (
    <button className={`flex h-full items-center justify-center ${w}`}>
      <svg viewBox="0 0 20 20" width="20" height="20" fill="none" stroke="#bbb" strokeWidth="1.500">{children}</svg>
    </button>
  );
}

const personShape = 'M10 1l3 5 1 6 6 6-4 1-6-5-6 5-4-1 6-6 1-6z';

function StatusBar() {
  const box = 'flex h-[33px] items-center border border-[#7d7d7d] bg-[#555]';
  const arrow = 'flex w-5 justify-center';
  const tightArrow = 'flex w-[18px] justify-center';
  return (
    <footer className="flex h-[38px] justify-between border-b-2 border-black bg-[#383838]">
      <div className="flex items-start pl-3.5 text-[15px]">
        <button className="h-6 w-[60px] bg-linear-to-b from-[#666] to-[#8a8a8a] leading-[22px] font-medium text-white [clip-path:polygon(0_0,100%_0,90%_85%,85%_100%,15%_100%,10%_85%)]">模型</button>
        <button className="h-6 w-[84px] bg-[#555] leading-[22px] text-[#b5b5b5] [clip-path:polygon(3%_0,100%_0,94%_85%,90%_100%,8%_100%,3%_85%)]">Layout1</button>
        <button aria-label="新建布局" className="ml-[5px] flex h-[22px] w-7 items-center justify-center rounded-tl-xl rounded-br-xl bg-[#555]">
          <svg viewBox="0 0 10 10" width="11" height="11"><path d="M5 0v10M0 5h10" stroke="#ccc" strokeWidth="2" /></svg>
        </button>
      </div>
      <div className="flex gap-0.5 pt-px pr-0.5 text-white">
        <button className={`${box} w-[37px] justify-center text-[15px]`}>模型</button>
        <div className={box}>
          <Slot><path d="M4 1v18M8 1v18M12 1v18M16 1v18M1 4h18M1 8h18M1 12h18M1 16h18" strokeWidth="1" /></Slot>
          <Slot><path d="M2 3h17M2 7h17M2 11h17M2 15h17M2 19h17" strokeDasharray="1 3" /></Slot>
          <span className={tightArrow}><Caret /></span>
        </div>
        <div className={box}>
          <Slot><path d="M3 2v15h16M3 11h5v6" /></Slot>
          <Slot><g stroke="#2f8df0" strokeWidth="2"><circle cx="9" cy="10" r="8" /><path d="M9 10h11M9 10l5-7" /></g></Slot>
          <span className={tightArrow}><Caret /></span>
          <Slot><path d="M0 1l20 17M10 0v20" /></Slot>
          <span className={tightArrow}><Caret /></span>
          <span className="h-full w-px bg-[#7d7d7d]" />
          <Slot><g stroke="#2f8df0" strokeWidth="2"><path d="M17 2L2 17h18M10 6v7" /></g></Slot>
          <Slot><path d="M4 4h14v14H4z" stroke="#2f8df0" strokeWidth="2" /><path d="M0 0h7v7H0z" fill="#0c0" stroke="#031" /></Slot>
          <span className={tightArrow}><Caret /></span>
        </div>
        <div className={box}>
          <Slot><path d={personShape} fill="#2f8df0" stroke="#2f8df0" /><circle cx="14" cy="5" r="3" fill="#444" stroke="#58b0ff" /></Slot>
          <Slot><path d={personShape} fill="#bbb" stroke="none" /><path d="M17 1l-4 5h4l-4 5" /></Slot>
          <Slot><path d={personShape} fill="#bbb" stroke="none" /></Slot>
          <button className="flex items-center gap-1 pr-1.5 pl-[3px] text-[14px]">1:1 <Caret /></button>
        </div>
        <div className={box}>
          <Slot><circle cx="10" cy="10" r="5" strokeWidth="4" /><circle cx="10" cy="10" r="8" strokeWidth="2.500" strokeDasharray="3.200 3.100" /></Slot>
          <span className={arrow}><Caret /></span>
          <span className="h-full w-px bg-[#7d7d7d]" />
          <Slot><path d="M10 1v18M1 10h18" strokeWidth="2" /></Slot>
        </div>
        <div className={box}><Slot><path d="M2 1h8v8H2z" /><circle cx="15" cy="8" r="3.500" /><path d="M10 12l4 7H6z" /></Slot></div>
        <div className={box}><Slot><circle cx="10" cy="10" r="9.200" fill="#075eb0" stroke="#1c8cf4" /><path d="M10 12l4-5" stroke="#7cc4ff" /></Slot></div>
        <div className={box}>
          <Slot w="w-9"><path d="M0 0h20v20H0z" fill="#f2f2f2" stroke="#222" /><path d="M1 14C6 14 6 4 9 4s3 7 5 9" stroke="#222" /><path d="M15 10l5 9H10z" fill="#e8641a" stroke="none" /></Slot>
        </div>
        <div className={box}>
          <Slot w="w-8"><path d="M1 3h18v14H1z" /><path d="M10 5h6v6zM4 9v6h6z" fill="#ddd" stroke="none" /></Slot>
          <Slot w="w-7"><path d="M1 3h18M1 10h18M1 17h18" strokeWidth="2" /></Slot>
        </div>
      </div>
    </footer>
  );
}

export default function App() {
  return (
    <div className="relative flex h-screen flex-col overflow-hidden bg-[#383838] font-['Open_Sans','Noto_Sans_CJK_SC',sans-serif]">
      <header className="flex shrink-0">
        <button aria-label="应用程序菜单" className="flex h-[52px] w-[51px] items-center justify-center gap-1 border-2 border-[#222] bg-linear-to-b from-[#a0a0a0] to-[#6a6a6a]">
          <Logo size={29} />
          <Caret className="text-[#333]" />
        </button>
        <div className="flex-1">
          <TitleBar />
          <MenuBar />
        </div>
      </header>
      <FileTabs />
      <Toolbar />
      <main className="flex min-h-0 flex-1">
        <LayerPanel />
        <LeftTools />
        <section className="relative flex-1 bg-black">
          <p className="pt-[5px] pl-1 text-[15px] leading-[22px] text-white">[−][俯视][二维线框]</p>
          <ViewCube />
          <NavBar />
          <CommandWindow />
        </section>
        <RightTools />
        <PalettePanel />
      </main>
      <StatusBar />
      <DraftingDialog />
    </div>
  );
}
